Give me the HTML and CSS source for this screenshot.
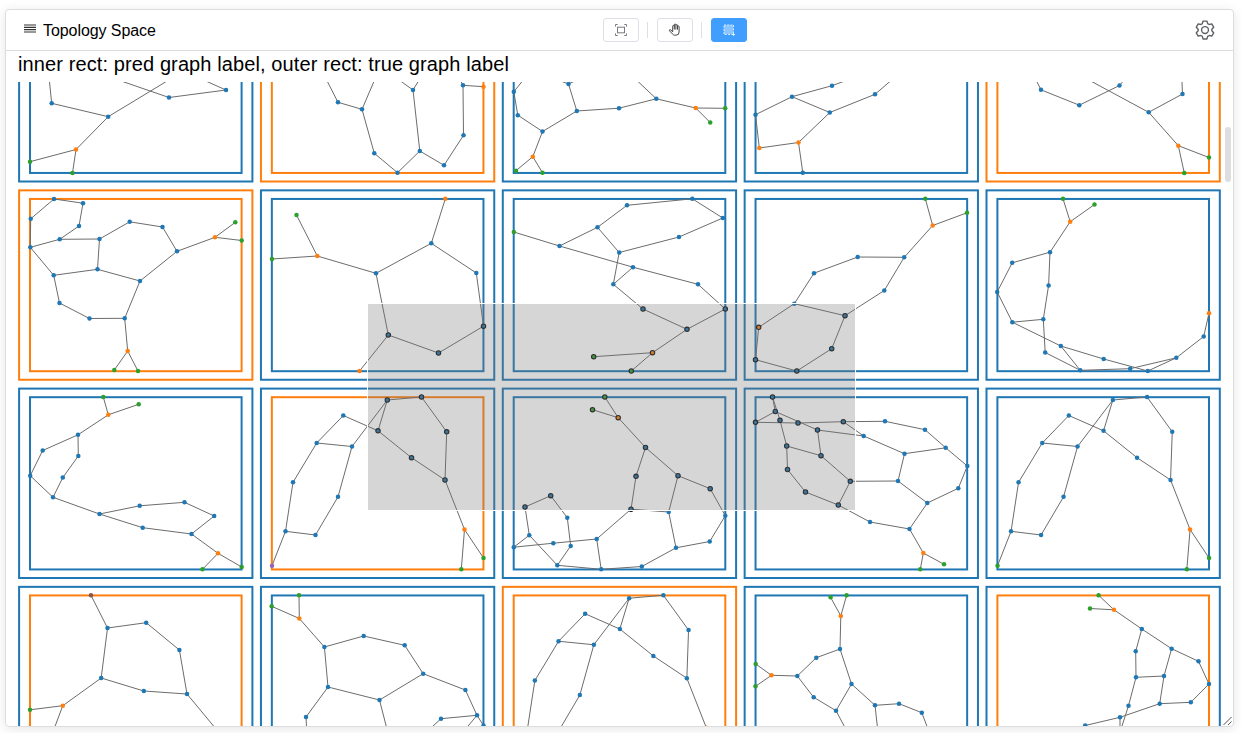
FILE: index.html
```html
<!DOCTYPE html>
<html lang="en">
<head>
<meta charset="utf-8">
<title>Topology Space</title>
<link rel="stylesheet" href="styles.css">
</head>
<body>
<main class="card">
  <header class="card-header">
    <div class="card-title">
      <svg class="menu-icon" viewBox="0 0 12 9"><path d="M0 1h12M0 3.300h12M0 5.700h12M0 8h12"/></svg>
      <span class="card-name">Topology Space</span>
    </div>
    <div class="tools">
      <button class="tool" aria-label="Fit">
        <svg viewBox="0 0 14 14"><rect x="3.500" y="4.200" width="7" height="5.600"/><path d="M1.500 3.600V1.500h2.200M10.300 1.500h2.200v2.100M12.500 10.400v2.100h-2.200M3.700 12.500H1.500v-2.100"/></svg>
      </button>
      <span class="divider"></span>
      <button class="tool tool-hand" aria-label="Pan">
        <svg viewBox="0 0 14 14"><path d="M4.700 8.900V3.300q0-.9.800-.9t.8.900V1.900q0-.9.800-.9t.8.900v.6q0-.9.8-.9t.8.900v1.200q0-.8.8-.8t.8.900v5.200q0 3.200-3.200 3.200H6.700q-1.400 0-2.300-1.300L1.600 7.900q-.5-.8.100-1.200.6-.3 1.200.3l1.800 1.900M6.300 3v3.600M7.900 2.500v4.100M9.500 3v3.600"/></svg>
      </button>
      <span class="divider"></span>
      <button class="tool tool-active" aria-label="Select">
        <svg viewBox="0 0 14 14"><rect class="select-area" x="2" y="2" width="9" height="9"/><rect class="select-frame" x="2" y="2" width="9.500" height="9.500"/><path d="M11.500 10v3M10 11.500h3"/></svg>
      </button>
    </div>
    <svg class="gear" viewBox="0 0 1024 1024"><path d="M600.700 64a32 32 0 0 1 30.500 22.200l35.200 109.400c14.700 7.200 28.700 15.400 42.400 24.400l112.400-24.200a32 32 0 0 1 34.400 15.300L944.300 364.800a32 32 0 0 1-4 37.500l-77.100 85.100a357.100 357.100 0 0 1 0 49l77.100 85.200a32 32 0 0 1 4 37.500l-88.700 153.600a32 32 0 0 1-34.400 15.300L708.800 803.900c-13.600 9-27.800 17.200-42.300 24.300l-35.300 109.600A32 32 0 0 1 600.700 960H423.300a32 32 0 0 1-30.500-22.200L357.700 828.500a351.600 351.600 0 0 1-42.600-24.600l-112.300 24.200a32 32 0 0 1-34.400-15.300L79.700 659.200a32 32 0 0 1 4-37.500l77.100-85.200a357.100 357.100 0 0 1 0-48.900l-77.100-85.200a32 32 0 0 1-4-37.500l88.700-153.700a32 32 0 0 1 34.400-15.300l112.300 24.300c13.800-9.100 28-17.400 42.600-24.600l35.200-109.300A32 32 0 0 1 423.200 64H600.600zm-23.400 64H446.700l-36.300 113.100-24.500 12a294.100 294.100 0 0 0-34.800 20.100l-22.700 15.400-116.200-25.100-65.300 113.200 79.700 88.200-1.900 27.100a293.100 293.100 0 0 0 0 40.200l1.900 27.100-79.800 88.200 65.300 113.200 116.200-25 22.700 15.300a294.100 294.100 0 0 0 34.800 20.100l24.500 12L446.700 896h130.700l36.500-113.100 24.400-11.900a288.300 288.300 0 0 0 34.700-20.100l22.600-15.300 116.300 25 65.300-113.200-79.800-88.200 1.900-27.100a293.100 293.100 0 0 0 0-40.300l-1.900-27.100 79.800-88.100-65.300-113.200-116.300 24.900-22.600-15.200a288.300 288.300 0 0 0-34.700-20.100l-24.400-11.900L577.300 128zM512 320a192 192 0 1 1 0 384 192 192 0 0 1 0-384zm0 64a128 128 0 1 0 0 256 128 128 0 0 0 0-256z"/></svg>
  </header>
  <p class="legend">inner rect: pred graph label, outer rect: true graph label</p>
  <section class="viewport">
    <svg id="board" class="board" viewBox="6 82 1216 644"></svg>
    <div class="scrollbar"><div class="thumb"></div></div>
    <svg class="resizer" viewBox="0 0 10 10"><path d="M.500 9L8.500 1M5 9L8.500 5.500"/></svg>
  </section>
</main>
<script src="graphs.js"></script>
</body>
</html>
```

FILE: styles.css
```css
* { box-sizing: border-box; }

body {
  margin: 0;
  padding: 9px 7px 0 5px;
  height: 733px;
  overflow: hidden;
  background: #fff;
  color: #000;
  font-family: "Liberation Sans", Arial, sans-serif;
}

.card {
  display: flex;
  flex-direction: column;
  height: 718px;
  border: 1px solid #dcdddf;
  border-radius: 4px;
  overflow: hidden;
  box-shadow: 0 2px 12px rgba(0, 0, 0, .1);
}

.card-header {
  display: flex;
  flex: none;
  align-items: center;
  height: 41px;
  padding: 0 18px;
  border-bottom: 1px solid #dcdddf;
}

.card-title {
  display: flex;
  flex: 0 0 579px;
  gap: 7px;
  font-size: 16px;
  line-height: 20px;
}

.card-name {
  padding-top: 1px;
  margin-bottom: -1px;
  letter-spacing: -.07px;
}

.menu-icon {
  width: 12px;
  height: 9px;
  margin-top: 4px;
  fill: none;
  stroke: #333;
  stroke-width: 1.200;
}

.tools {
  display: flex;
  align-items: center;
}

.tool {
  display: flex;
  align-items: center;
  justify-content: center;
  width: 36px;
  height: 24px;
  padding: 0;
  border: 1px solid #dcdfe6;
  border-radius: 3px;
  background: #fff;
}

.tool svg {
  width: 14px;
  height: 14px;
  fill: none;
  stroke: #777a80;
}

.tool-hand svg { stroke: #444; }

.tool-active {
  border-color: #409eff;
  background: #409eff;
}

.tool-active svg { stroke: #d5eaff; }
.tool-active .select-area { fill: #8cc5ff; stroke: none; }
.tool-active .select-frame { stroke-dasharray: 2 1.200; }

.divider {
  width: 1px;
  height: 16px;
  margin: 0 9px 0 8px;
  background: #dcdfe6;
}

.gear {
  width: 22px;
  height: 22px;
  margin-left: auto;
  margin-right: -1px;
  fill: #606266;
}

.legend {
  flex: none;
  height: 31px;
  margin: 0;
  padding-left: 12px;
  font-size: 20px;
  line-height: 26px;
  letter-spacing: .107px;
  white-space: nowrap;
}

.viewport {
  position: relative;
  display: flex;
  flex: 1;
  min-height: 0;
}

.board {
  flex: none;
  width: 1216px;
  height: 644px;
}

.frame { fill: none; stroke-width: 2; }
.edge { stroke: #6c6c6c; stroke-width: 1; }
.node.selected { stroke: #111; stroke-width: 1.100; }

.brush {
  fill: #777;
  fill-opacity: .3;
  stroke: #fff;
  shape-rendering: crispEdges;
}

.scrollbar {
  width: 6px;
  margin-left: 3px;
  padding-top: 45px;
}

.thumb {
  height: 55px;
  border-radius: 3px;
  background: #dddedf;
}

.resizer {
  position: absolute;
  right: 0;
  bottom: 0;
  width: 10px;
  height: 10px;
  fill: none;
  stroke: #444;
  stroke-width: .9;
}
```

FILE: graphs.js
```js
const PALETTE = { b: "#1f77b4", o: "#ff7f0e", g: "#2ca02c", p: "#9467bd", n: "#8c564b" };
const PITCH_X = 241.850;
const PITCH_Y = 198.250;

// Node: "x,y[,colour][,s]" (s = selected). Edge: "from-to".
const arch = {
  nodes: "343.3,415.5 316.7,443 352,446.5 293,482.3 338,496.8 285.5,531.3 315.5,535 272,565.7,p 378,430.8,b,s 387.3,400,b,s 421.5,397,b,s 446.7,431.8,b,s 411.5,457.7,b,s 445,480,b,s 464.5,529.5,o 461.3,569.3,g 483.5,558,g",
  edges: "0-1 1-2 1-3 3-5 5-6 6-4 4-2 5-7 0-8 2-9 8-9 9-10 10-11 11-13 8-12 12-13 13-14 14-15 14-16"
};
const plainArch = arch.nodes.replace(/,b,s/g, "").replace(",p", ",g");

// [column, row, outer colour, inner colour, nodes, edges, dx, dy]
const cells = [
  [0, 0, "b", "b",
    "51.7,103.3 108.2,116.7 76,149.5,o 30,161.7,g 72.5,173,g 169,97.5 226,90 48.5,72 95,72 181,72.6 185.5,72",
    "0-1 1-2 2-3 2-4 5-6 0-7 5-8 1-9 6-10"],
  [1, 0, "o", "o",
    "338,102.3 362,109.3 374.3,153.3 397.5,172.7 419.8,151 444,165.3 463.5,135.3 463,85.3 483.5,86.7,o 413,90 322.5,72 378,72 388,72 424,72 456,72",
    "0-1 1-2 2-3 3-4 4-5 5-6 6-7 7-8 4-9 0-10 1-11 9-12 9-13 7-14"],
  [2, 0, "b", "b",
    "513.8,91.7 517.8,115.2 542.5,131.5 576.8,111 568.5,84 619,108.2 656.3,98.8 695.7,108,o 725.2,108.3,g 710.2,122.5,g 532.8,156.7,o 516,170.7,g 542.5,172.8,g 529,73 540,73 590,74 628,72",
    "0-1 1-2 2-3 3-4 3-5 5-6 6-7 7-8 7-9 2-10 10-11 10-12 0-13 4-14 4-15 6-16"],
  [3, 0, "b", "b",
    "755.5,114.7 792,96.7 832,85.7 829.8,112.5 875,94.3 798.5,142.5,o 759.3,148,o 802.8,172.8 869,72 901,72",
    "0-1 1-2 1-3 3-4 3-5 5-6 6-0 5-7 2-8 4-9"],
  [4, 0, "o", "o",
    "1119.5,85.5 1148.7,112.3 1182.5,94 1178.3,145.7,o 1209,157.5,g 1184.3,173,g 1079.3,105.2 1041,89.8 1131,72 1074,72 1181.5,72 1032,72",
    "1-2 1-3 3-4 3-5 7-6 6-0 0-8 1-9 2-10 7-11"],
  [0, 1, "o", "o",
    "54,199 83,203.2 79,226 59.7,239.3 30.3,247.3 30.7,218.8 99.5,239 129.7,221.8 162.5,227 177,251.3 140,281 97.5,269.3 53.7,275.3 59.5,303 89.5,318.5 124.7,318.3 127.7,351,o 114.3,370,g 138,371,g 215,237.3,o 235.3,222.3,g 241.7,240.5,g",
    "0-1 1-2 2-3 3-4 4-5 5-0 3-6 6-7 7-8 8-9 9-10 10-11 11-6 11-12 12-4 12-13 13-14 14-15 15-10 15-16 16-17 16-18 9-19 19-20 19-21"],
  [1, 1, "b", "b",
    "296.5,215,g 317.3,256,o 272,259,g 376,273.3 431.3,243.3 445.3,198.8,o 476.3,273 483.5,326.2,b,s 438.5,353,b,s 388.3,335,b,s 359.5,371,o",
    "0-1 1-2 1-3 3-4 4-5 4-6 6-7 7-8 8-9 9-3 9-10"],
  [2, 1, "b", "b",
    "513.8,232,g 559.5,246 597.5,227.3 627,205.3 692.3,198.8 722.8,218 679,237 619.2,252.5 613.3,284.3 633,267.2 698,284.3 725.3,309,b,s 687,329.3,b,s 643,309,b,s 652.5,352.7,o,s 593.7,356.7,g,s 631.3,371,g,s",
    "0-1 1-2 2-3 3-4 4-5 5-6 6-7 7-2 7-8 8-9 1-9 9-10 10-11 11-12 12-13 13-8 12-14 14-15 14-16"],
  [3, 1, "b", "b",
    "925.3,198.8,g 967,212.8,g 932.7,225.5,o 904.2,257.3 857.7,257 814,273.2 794.3,303.7 845,315.7,b,s 884.3,290.5 831.7,348.7,b,s 796.8,371,b,s 755.5,359.7,b,s 758.7,327.3,o,s",
    "0-2 1-2 2-3 3-4 4-5 5-6 6-7 7-8 8-3 7-9 9-10 10-11 11-12 12-6"],
  [4, 1, "b", "b",
    "1063,198.8,g 1094.5,204.5,g 1070.2,221.7,o 1050,252.2 1012.2,262.8 997.2,292 1012.3,322.2 1043.3,319.3 1048.6,285.4 1045.2,352.5 1080.3,370.3 1060.8,346 1103.7,359 1147.8,371 1130.2,368.7 1176.3,357.8 1203.7,336.5 1209,313.2,o",
    "0-2 1-2 2-3 3-4 4-5 5-6 6-7 7-8 8-3 7-9 9-10 6-11 11-10 11-12 12-13 10-14 14-15 13-15 15-16 16-17"],
  [0, 2, "b", "b",
    "103.3,397,g 138.7,404.3,g 108.3,414.8,o 78,434.8 42.7,450.5 30.2,475.7 53,497.3 62.8,477.5 78.3,456 99.5,514 139.7,505.8 184.5,502.3 214.2,516 191.5,534 142.7,527.7 218,553.3,o 202.5,569.3,g 241.7,567,g",
    "0-2 1-2 2-3 3-4 4-5 5-6 6-7 7-8 8-3 6-9 9-10 10-11 11-12 12-13 13-14 14-9 13-15 15-16 15-17"],
  [1, 2, "b", "o", arch.nodes, arch.edges],
  [2, 2, "b", "b",
    "604.8,397,g,s 592.5,409.7,g,s 618.2,417.7,o,s 645.5,447.5,b,s 636,476.3,b,s 678,475.7,b,s 710.2,488.7,b,s 631,509.2,b,s 668.7,512 725.3,515.7 709.7,541.5 676,547.8 641.8,566.5 601.2,569.3 596.7,539 553.3,543.2 513.8,547.2 529.3,535.2 525,507,b,s 550.7,495.7,b,s 567.3,517.7 570.7,546 557.3,565.3",
    "0-2 1-2 2-3 3-4 3-5 5-6 4-7 7-8 8-5 6-9 9-10 10-11 11-8 11-12 12-13 13-14 14-7 14-15 15-16 16-17 17-18 18-19 19-20 20-21 21-22 17-22 22-13"],
  [3, 2, "b", "b",
    "772.5,397,b,s 775.3,411.5,b,s 780,420.3,b,s 755.5,422.3,b,s 798,423,b,s 817.5,430,b,s 843.3,421.7,b,s 885,421.3 925,429.7 945.7,447.8 967.3,466 958.3,488.3 927.3,503 898,481 904.5,453.7 863.7,436 786.7,446,b,s 821,455.7,b,s 787.5,469.5,b,s 805.5,492,b,s 838.3,505,b,s 850.3,481.3,b,s 870,522 909.5,529 923.3,553,o 920.3,569.3,g 944,564.3,g",
    "0-1 1-3 3-4 4-6 6-7 7-8 8-9 9-10 10-11 11-12 12-13 13-14 14-9 14-15 15-6 15-5 5-1 5-17 17-16 16-2 2-0 16-18 18-19 19-20 20-21 21-17 21-13 20-22 22-23 23-12 23-24 24-25 24-26"],
  [4, 2, "b", "b", plainArch, arch.edges, 3 * PITCH_X, 0],
  [0, 3, "b", "o",
    "91,595.3,n 107.5,628 146.2,622.7 179.4,650 187,694 143.8,691 101.2,678 62.8,705.7,o 30,709.8,g 51,737 221,735",
    "0-1 1-2 2-3 3-4 4-5 5-6 6-1 6-7 7-8 7-9 4-10"],
  [1, 3, "b", "b",
    "299,595.3,g 271.7,606.3,g 299.3,618.5,o 324.4,647 363.7,636 404.7,645.3 423.2,673.7 379.5,700 328,687 306,717 465.4,690 477,715.3 441,718.7 483.5,725.5 307,737 389,737 421,737 459,737",
    "0-2 1-2 2-3 3-4 4-5 5-6 6-7 7-8 8-3 8-9 6-10 10-11 11-12 11-13 9-14 7-15 12-16 11-17"],
  [2, 3, "o", "o", plainArch, arch.edges, PITCH_X, PITCH_Y],
  [3, 3, "b", "b",
    "830.6,597.3,g 846.6,595.3,g 840.8,616,o 840,649 816.3,657.7 797.3,676 771.5,675.3,o 755.7,664,g 755.5,686.3,g 813.7,697.3 836,710.7 851.5,684 875,705.3 899,703.7 921.8,712.7 850,737 878.5,737 931,737",
    "0-2 1-2 2-3 3-4 4-5 5-6 6-7 6-8 5-9 9-10 10-11 11-3 11-12 12-13 13-14 10-15 12-16 14-17"],
  [4, 3, "b", "o",
    "1098.6,595.3,g 1090,608.5,g 1114,609.8,o 1141.8,629 1171.6,648.7 1198.5,661.3 1209,684 1190.8,702.3 1159.7,703.7 1164,676 1136,677.3 1135.7,651.3 1128.5,705.7 1120,717.3 1085.2,725.5 1118.5,737 1120,737",
    "0-2 1-2 2-3 3-4 4-5 5-6 6-7 7-8 8-9 9-4 9-10 10-11 11-3 10-12 8-13 13-14 12-15 13-16"]
];

const board = document.getElementById("board");

function draw(tag, attrs) {
  const el = document.createElementNS("http://www.w3.org/2000/svg", tag);
  for (const key in attrs) el.setAttribute(key, attrs[key]);
  board.appendChild(el);
}

for (const [col, row, outer, inner, nodeText, edgeText, dx = 0, dy = 0] of cells) {
  const x = 19.100 + col * PITCH_X;
  const y = -7.900 + row * PITCH_Y;
  draw("rect", { class: "frame", x, y, width: 233.300, height: 189.400, stroke: PALETTE[outer] });
  draw("rect", { class: "frame", x: x + 10.900, y: y + 8.600, width: 211.600, height: 172.250, stroke: PALETTE[inner] });

  const nodes = nodeText.split(" ").map(t => {
    const [nx, ny, color = "b", flag] = t.split(",");
    return { x: +nx + dx, y: +ny + dy, color, selected: flag === "s" };
  });
  for (const e of edgeText.split(" ")) {
    const [a, b] = e.split("-").map(i => nodes[i]);
    draw("line", { class: "edge", x1: a.x, y1: a.y, x2: b.x, y2: b.y });
  }
  for (const n of nodes) {
    draw("circle", { class: n.selected ? "node selected" : "node", cx: n.x, cy: n.y, r: n.selected ? 2.200 : 2.250, fill: PALETTE[n.color] });
  }
}

draw("rect", { class: "brush", x: 367.500, y: 303.500, width: 488, height: 207 });
```
